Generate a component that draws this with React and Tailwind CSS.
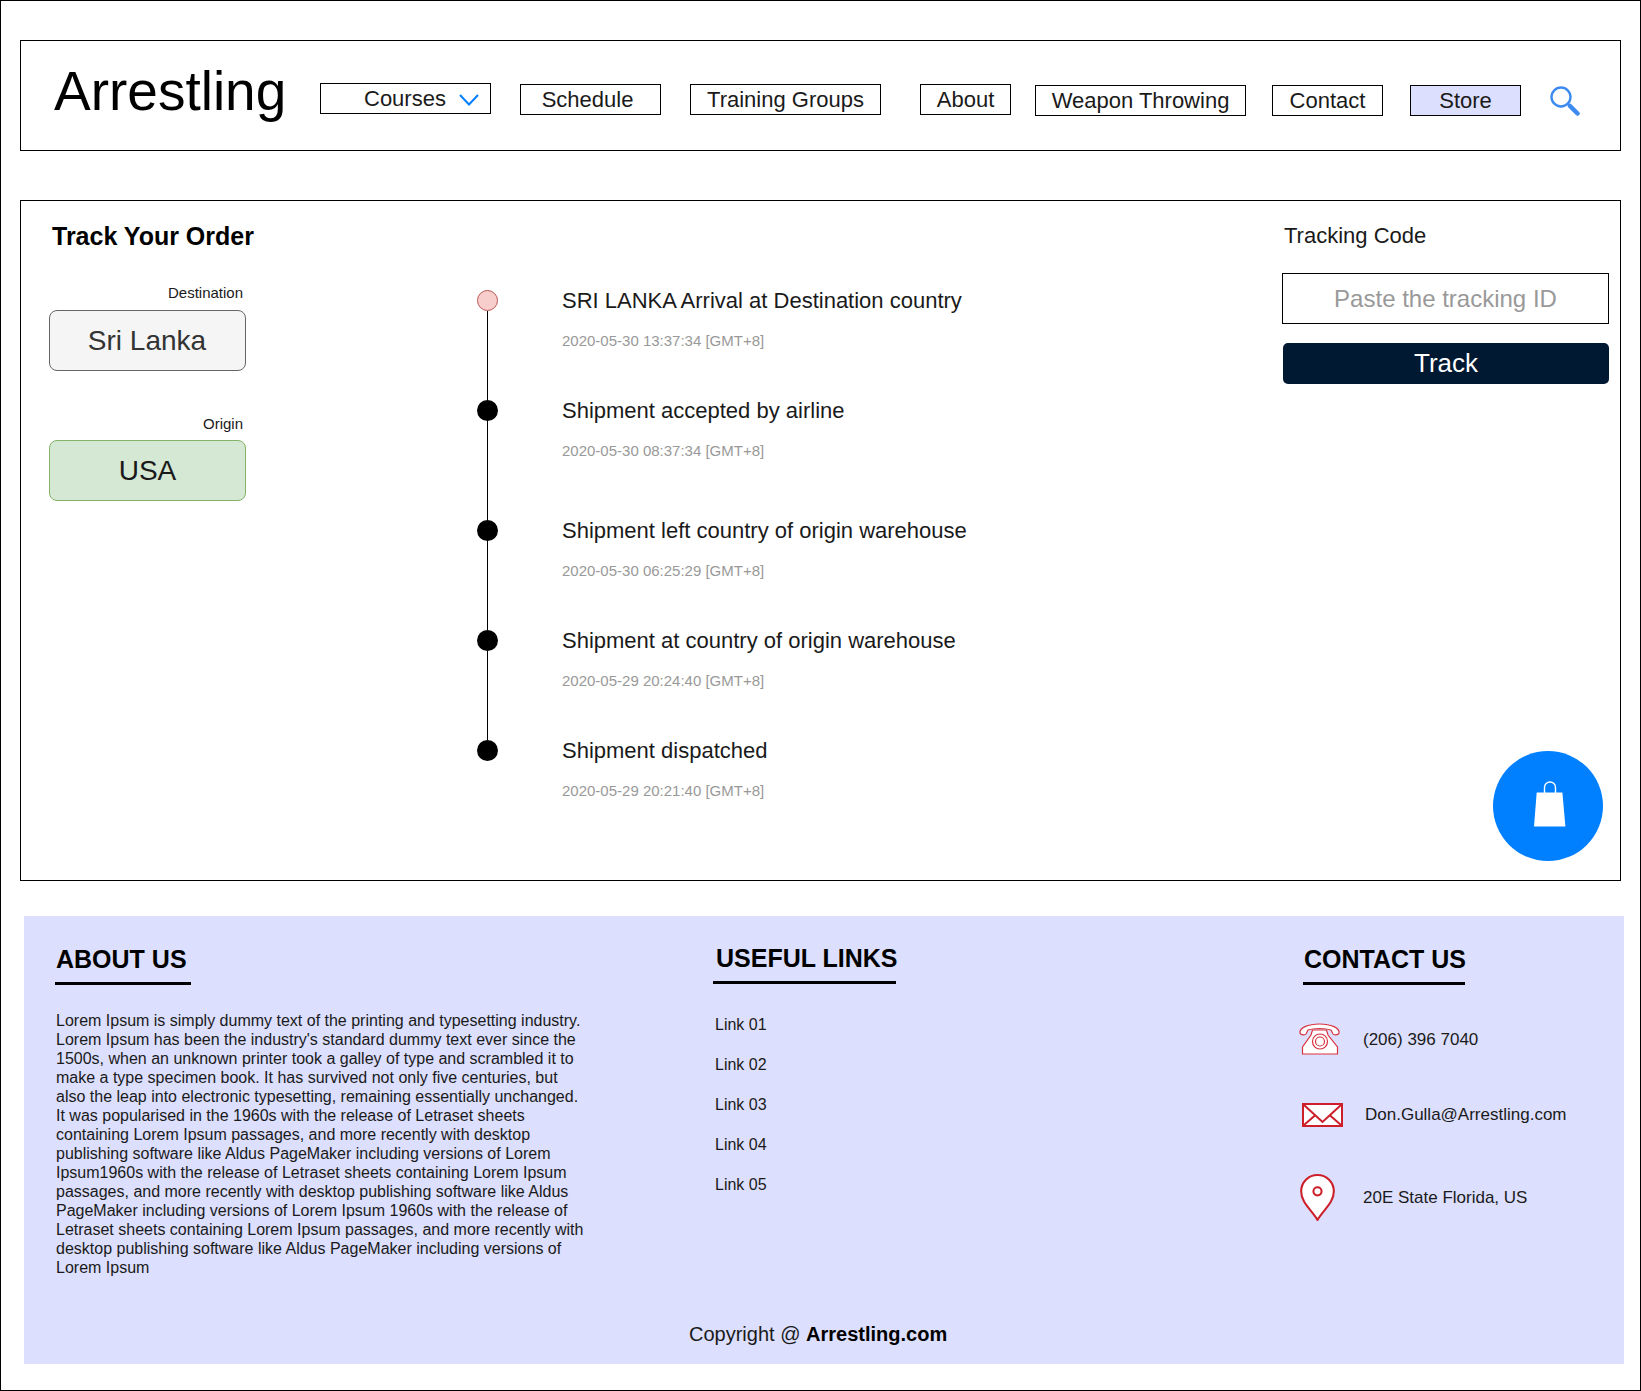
const navItems = [
  { label: "Schedule", className: "ml-[29px] mt-[43px] w-[141px] pr-[6px]" },
  { label: "Training Groups", className: "ml-[29px] mt-[43px] w-[191px]" },
  { label: "About", className: "ml-[39px] mt-[43px] w-[91px]" },
  { label: "Weapon Throwing", className: "ml-[24px] mt-[44px] w-[211px] border-[#666]" },
  { label: "Contact", className: "ml-[26px] mt-[44px] w-[111px]" },
  { label: "Store", className: "ml-[27px] mt-[44px] w-[111px] bg-[#dcdffd]" },
];

const events = [
  { title: "SRI LANKA Arrival at Destination country", time: "2020-05-30 13:37:34 [GMT+8]", height: "h-[110px]", first: true },
  { title: "Shipment accepted by airline", time: "2020-05-30 08:37:34 [GMT+8]", height: "h-[120px]" },
  { title: "Shipment left country of origin warehouse", time: "2020-05-30 06:25:29 [GMT+8]", height: "h-[110px]" },
  { title: "Shipment at country of origin warehouse", time: "2020-05-29 20:24:40 [GMT+8]", height: "h-[110px]" },
  { title: "Shipment dispatched", time: "2020-05-29 20:21:40 [GMT+8]", height: "h-[61px]", last: true },
];

const lorem = `Lorem Ipsum is simply dummy text of the printing and typesetting industry.
Lorem Ipsum has been the industry's standard dummy text ever since the
1500s, when an unknown printer took a galley of type and scrambled it to
make a type specimen book. It has survived not only five centuries, but
also the leap into electronic typesetting, remaining essentially unchanged.
It was popularised in the 1960s with the release of Letraset sheets
containing Lorem Ipsum passages, and more recently with desktop
publishing software like Aldus PageMaker including versions of Lorem
Ipsum1960s with the release of Letraset sheets containing Lorem Ipsum
passages, and more recently with desktop publishing software like Aldus
PageMaker including versions of Lorem Ipsum 1960s with the release of
Letraset sheets containing Lorem Ipsum passages, and more recently with
desktop publishing software like Aldus PageMaker including versions of
Lorem Ipsum`;

const FooterHeading = ({ children, lineClass, textClass }) => (
  <div>
    <h3 className={`h-[30px] flex items-center text-[25px] leading-none font-bold text-black whitespace-nowrap ${textClass}`}>
      {children}
    </h3>
    <div className={`h-[3px] mt-[8px] bg-black ${lineClass}`} />
  </div>
);

const App = () => {
  return (
    <div className="w-[1641px] h-[1391px] border border-black bg-white pl-[19px] pt-[39px] overflow-hidden text-[#1a1a1a] [font-family:'Liberation_Sans',Arial,sans-serif]">
      {/* Header */}
      <header className="w-[1601px] h-[111px] border border-black flex items-start">
        <h1 className="w-[299px] pl-[33px] pt-[23px] text-[55px] leading-none text-black whitespace-nowrap">
          Arrestling
        </h1>
        <button className="mt-[42px] w-[171px] h-[31px] border border-black flex items-center pl-[43px] text-[22px] leading-none">
          Courses
          <svg className="ml-[13px] mt-[2px]" width="20" height="12" viewBox="0 0 20 12" fill="none" stroke="#007fff" strokeWidth="2">
            <path d="M1 1l9 9.500L19 1" />
          </svg>
        </button>
        {navItems.map((item) => (
          <button
            key={item.label}
            className={`h-[31px] border border-black flex items-center justify-center text-[22px] leading-none whitespace-nowrap ${item.className}`}
          >
            {item.label}
          </button>
        ))}
        <svg className="ml-[29px] mt-[45px]" width="30" height="30" viewBox="0 0 30 30" fill="none" stroke="#3d8bf0">
          <circle cx="11" cy="11" r="9.500" strokeWidth="2.400" />
          <path d="M18 18l2 2" strokeWidth="2" />
          <path d="M20 20l7.500 7.500" strokeWidth="4.500" strokeLinecap="round" />
        </svg>
      </header>

      {/* Tracking panel */}
      <main className="relative w-[1601px] h-[681px] mt-[49px] border border-black flex items-start">
        <div className="w-[225px] pl-[28px] pt-[19px] shrink-0">
          <h2 className="h-[32px] pl-[3px] flex items-center text-[25px] leading-none font-bold text-black whitespace-nowrap">
            Track Your Order
          </h2>
          <p className="mt-[32px] h-[18px] pr-[3px] text-right text-[15px] leading-[18px]">Destination</p>
          <div className="mt-[8px] h-[61px] rounded-lg border border-[#666] bg-[#f5f5f5] flex items-center justify-center text-[28px] text-[#333] pr-[1px]">
            Sri Lanka
          </div>
          <p className="mt-[44px] h-[18px] pr-[3px] text-right text-[15px] leading-[18px]">Origin</p>
          <div className="mt-[7px] h-[61px] rounded-lg border border-[#82b366] bg-[#d5e8d4] flex items-center justify-center text-[28px] text-[#1a1a1a]">
            USA
          </div>
        </div>

        {/* Timeline */}
        <div className="ml-[231px] pt-[89px] w-[700px] shrink-0">
          {events.map((ev) => (
            <div key={ev.title} className={`flex ${ev.height}`}>
              <div className="w-[21px] flex flex-col items-center shrink-0">
                <span
                  className={`w-[21px] h-[21px] rounded-full shrink-0 ${
                    ev.first ? "bg-[#f8cecc] border border-[#b85450]" : "bg-black"
                  }`}
                />
                {!ev.last && <span className="w-px flex-1 bg-black" />}
              </div>
              <div className="ml-[64px]">
                <p className="h-[21px] flex items-center text-[22px] leading-none whitespace-nowrap">{ev.title}</p>
                <p className="mt-[20px] text-[15px] leading-[20px] text-[#999] whitespace-nowrap">{ev.time}</p>
              </div>
            </div>
          ))}
        </div>

        {/* Tracking code */}
        <div className="ml-auto mr-[11px] w-[327px] pt-[22px] shrink-0">
          <p className="h-[26px] pl-[2px] text-[22px] leading-[26px]">Tracking Code</p>
          <input
            placeholder="Paste the tracking ID"
            className="mt-[24px] w-full h-[51px] border border-black bg-white text-center text-[24px] outline-none placeholder:text-[#999]"
          />
          <button className="mt-[19px] ml-[1px] w-[326px] h-[41px] pb-[2px] rounded-[5px] bg-[#001933] text-white text-[26px] leading-none">
            Track
          </button>
        </div>

        {/* Cart button */}
        <button className="absolute right-[17px] bottom-[19px] w-[110px] h-[110px] rounded-full bg-[#007fff] flex items-center justify-center">
          <svg width="32" height="46" viewBox="0 0 32 46" className="mb-[4px] ml-[3px]">
            <path d="M10.500 12V6.500a5.500 5.500 0 0 1 11 0V12" fill="none" stroke="#fff" strokeWidth="1.400" />
            <path d="M2.700 11.600h25.700L31.400 45.600H0z" fill="#fff" />
          </svg>
        </button>
      </main>

      {/* Footer */}
      <footer className="ml-[4px] mt-[35px] w-[1600px] h-[448px] bg-[#dcdffd] pt-[28px] flex flex-col">
        <div className="flex flex-1">
          <div className="w-[689px] pl-[31px] shrink-0">
            <div className="w-[136px]">
              <FooterHeading lineClass="w-[136px]" textClass="pl-[1px]">ABOUT US</FooterHeading>
            </div>
            <p className="mt-[26px] pl-[1px] text-[16px] leading-[19px] whitespace-pre-line">{lorem}</p>
          </div>

          <div className="w-[590px] shrink-0">
            <div className="w-[183px] -mt-[1px]">
              <FooterHeading lineClass="w-[183px]" textClass="pl-[3px]">USEFUL LINKS</FooterHeading>
            </div>
            <ul className="mt-[31px] pl-[2px] flex flex-col gap-[20px] text-[16px] leading-[20px]">
              <li>Link 01</li>
              <li>Link 02</li>
              <li>Link 03</li>
              <li>Link 04</li>
              <li>Link 05</li>
            </ul>
          </div>

          <div>
            <div className="w-[162px]">
              <FooterHeading lineClass="w-[162px]" textClass="pl-[1px]">CONTACT US</FooterHeading>
            </div>
            <div className="-ml-[5px] mt-[38px] text-[17px] leading-none">
              <div className="flex items-center h-[32px]">
                <svg width="43" height="32" viewBox="0 0 43 32" fill="#fff" stroke="#d9333f" strokeWidth="1.200">
                  <path d="M14.500 7h14l1.500 5 9.500 12v7H4.500v-7L13 12z" />
                  <path d="M2 10C1 5 10 1 21.500 1S42 5 41 10c-.5 2-5 2.500-6 1l-2-4C27 5 16 5 10 7l-2 4c-1 1.500-5.500 1-6-1z" />
                  <circle cx="22" cy="18.500" r="7.500" />
                  <circle cx="22" cy="18.500" r="4.500" />
                </svg>
                <span className="ml-[22px]">(206) 396 7040</span>
              </div>
              <div className="flex items-center h-[24px] mt-[48px] pl-[4px]">
                <svg width="41" height="24" viewBox="0 0 41 24" fill="#fff" stroke="#cc1f2a" strokeWidth="2">
                  <rect x="1" y="1" width="39" height="22" />
                  <path d="M2 2l18.500 17L39 2M2 22l11.500-10M39 22L27.500 12" fill="none" />
                </svg>
                <span className="ml-[22px] pb-[1px]">Don.Gulla@Arrestling.com</span>
              </div>
              <div className="flex items-center h-[46px] mt-[47px] pl-[2px]">
                <svg width="35" height="47" viewBox="0 0 34 46" fill="#fff" stroke="#cc1f2a" strokeWidth="2">
                  <path d="M17 45C11 35 1 28 1 17a16 16 0 0 1 32 0c0 11-10 18-16 28z" />
                  <circle cx="17" cy="17" r="4" />
                </svg>
                <span className="ml-[28px]">20E State Florida, US</span>
              </div>
            </div>
          </div>
        </div>
        <p className="pl-[665px] pb-[18px] text-[20px] leading-[24px] whitespace-nowrap">
          Copyright @ <span className="font-bold text-black">Arrestling.com</span>
        </p>
      </footer>
    </div>
  );
};

export default App;
